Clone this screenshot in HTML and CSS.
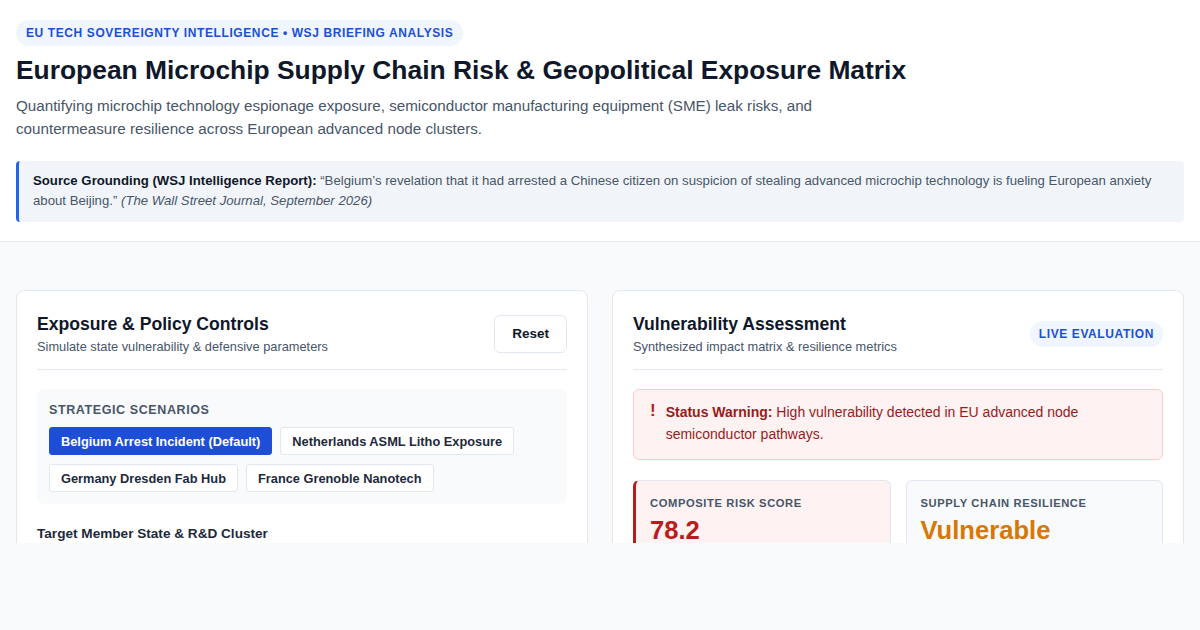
FILE: index.html
```html
<!DOCTYPE html>
<html lang="en">
<head>
<meta charset="utf-8">
<title>European Microchip Supply Chain Risk</title>
<link rel="stylesheet" href="styles.css">
</head>
<body>
<div class="viewport">
  <header class="header">
    <span class="eyebrow">EU Tech Sovereignty Intelligence • WSJ Briefing Analysis</span>
    <h1 class="title">European Microchip Supply Chain Risk &amp; Geopolitical Exposure Matrix</h1>
    <p class="lede">Quantifying microchip technology espionage exposure, semiconductor manufacturing equipment (SME) leak risks, and countermeasure resilience across European advanced node clusters.</p>
    <blockquote class="source">
      <strong>Source Grounding (WSJ Intelligence Report):</strong> “Belgium’s revelation that it had arrested a Chinese citizen on suspicion of stealing advanced microchip technology is fueling European anxiety about Beijing.” <em>(The Wall Street Journal, September 2026)</em>
    </blockquote>
  </header>
  <main class="main">
    <section class="card">
      <div class="card-head">
        <div>
          <h2 class="card-title">Exposure &amp; Policy Controls</h2>
          <p class="card-sub">Simulate state vulnerability &amp; defensive parameters</p>
        </div>
        <button class="btn-reset">Reset</button>
      </div>
      <div class="scenarios">
        <div class="section-label">Strategic Scenarios</div>
        <div class="chips">
          <button class="chip chip-active">Belgium Arrest Incident (Default)</button>
          <button class="chip">Netherlands ASML Litho Exposure</button>
          <button class="chip">Germany Dresden Fab Hub</button>
          <button class="chip">France Grenoble Nanotech</button>
        </div>
      </div>
      <div class="field-label">Target Member State &amp; R&amp;D Cluster</div>
    </section>
    <section class="card">
      <div class="card-head">
        <div>
          <h2 class="card-title">Vulnerability Assessment</h2>
          <p class="card-sub">Synthesized impact matrix &amp; resilience metrics</p>
        </div>
        <span class="live">Live Evaluation</span>
      </div>
      <div class="alert">
        <span class="alert-icon">!</span>
        <p class="alert-text"><strong>Status Warning:</strong> High vulnerability detected in EU advanced node semiconductor pathways.</p>
      </div>
      <div class="metrics">
        <div class="metric metric-risk">
          <div class="metric-label">Composite Risk Score</div>
          <div class="metric-value red">78.2</div>
        </div>
        <div class="metric">
          <div class="metric-label">Supply Chain Resilience</div>
          <div class="metric-value amber">Vulnerable</div>
        </div>
      </div>
    </section>
  </main>
</div>
</body>
</html>
```

FILE: styles.css
```css
* { box-sizing: border-box; }
html, body { margin: 0; padding: 0; }
body {
  background: #f8fafc;
  font-family: "Liberation Sans", Arial, sans-serif;
  color: #0f172a;
}
.viewport {
  height: 543px;
  overflow: hidden;
}
.header {
  background: #ffffff;
  padding: 20px 16px 19px;
  border-bottom: 1px solid #e2e8f0;
}
.eyebrow {
  display: inline-block;
  background: #eff6ff;
  color: #1d4ed8;
  font-size: 12px;
  font-weight: 700;
  letter-spacing: 0.6px;
  text-transform: uppercase;
  padding: 5px 10px;
  border-radius: 999px;
  line-height: 16px;
}
.title {
  margin: 7px 0 0;
  font-size: 26.4px;
  line-height: 34px;
  font-weight: 700;
  color: #0f172a;
}
.lede {
  margin: 7px 0 0;
  max-width: 830px;
  font-size: 15.2px;
  line-height: 23px;
  color: #475569;
}
.source {
  margin: 21px 0 0;
  background: #f1f5f9;
  border-left: 3px solid #2563eb;
  border-radius: 4px;
  padding: 10px 14px 11px;
  font-size: 13.2px;
  line-height: 20px;
  color: #475569;
}
.source strong { color: #0f172a; }
.main {
  display: grid;
  grid-template-columns: 1fr 1fr;
  gap: 24px;
  padding: 48px 16px;
  align-items: start;
}
.card {
  background: #ffffff;
  border: 1px solid #e2e8f0;
  border-radius: 8px;
  padding: 20px;
  min-height: 400px;
}
.card-head {
  display: flex;
  justify-content: space-between;
  align-items: center;
  padding-bottom: 13px;
  border-bottom: 1px solid #e2e8f0;
  margin-bottom: 19px;
}
.card-title {
  margin: 0;
  font-size: 17.6px;
  line-height: 26px;
  font-weight: 700;
  color: #0f172a;
}
.card-sub {
  margin: 0;
  font-size: 12.8px;
  line-height: 19px;
  color: #475569;
}
.btn-reset {
  font-family: inherit;
  font-size: 13.5px;
  font-weight: 700;
  color: #0f172a;
  background: #ffffff;
  border: 1px solid #e2e8f0;
  border-radius: 6px;
  height: 38px;
  padding: 0 17px;
}
.scenarios {
  background: #f8fafc;
  border-radius: 8px;
  padding: 12px;
}
.section-label {
  font-size: 12.5px;
  font-weight: 700;
  letter-spacing: 0.6px;
  text-transform: uppercase;
  color: #475569;
  line-height: 18px;
  margin-bottom: 8px;
}
.chips {
  display: flex;
  flex-wrap: wrap;
  gap: 9px 8px;
}
.chip {
  font-family: inherit;
  font-size: 12.8px;
  font-weight: 700;
  color: #1e293b;
  background: #ffffff;
  border: 1px solid #e2e8f0;
  border-radius: 3px;
  height: 28px;
  padding: 0 11px;
}
.chip-active {
  background: #1d4ed8;
  border-color: #1d4ed8;
  color: #ffffff;
}
.field-label {
  margin-top: 21px;
  font-size: 13.6px;
  font-weight: 700;
  color: #1e293b;
  line-height: 18px;
}
.live {
  background: #eff6ff;
  color: #1d4ed8;
  font-size: 12px;
  font-weight: 700;
  letter-spacing: 0.6px;
  text-transform: uppercase;
  padding: 5px 9px;
  border-radius: 999px;
  line-height: 16px;
}
.alert {
  display: flex;
  gap: 10px;
  background: #fef2f2;
  border: 1px solid #fecaca;
  border-radius: 6px;
  padding: 11px 16px 14px;
}
.alert-icon {
  color: #b91c1c;
  font-weight: 700;
  font-size: 17px;
  line-height: 20px;
}
.alert-text {
  margin: 0;
  font-size: 14px;
  line-height: 22px;
  color: #991b1b;
}
.metrics {
  display: grid;
  grid-template-columns: 1fr 1fr;
  gap: 15px;
  margin-top: 20px;
}
.metric {
  background: #f8fafc;
  border: 1px solid #e2e8f0;
  border-radius: 6px;
  padding: 14px;
  height: 110px;
}
.metric-risk {
  background: #fef2f2;
  border-left: 3px solid #b91c1c;
}
.metric-label {
  font-size: 11.2px;
  font-weight: 700;
  letter-spacing: 0.6px;
  text-transform: uppercase;
  color: #475569;
  line-height: 16px;
}
.metric-value {
  margin-top: 3px;
  font-size: 25.6px;
  font-weight: 700;
  line-height: 32px;
}
.red { color: #b91c1c; }
.amber { color: #d97706; }
```
